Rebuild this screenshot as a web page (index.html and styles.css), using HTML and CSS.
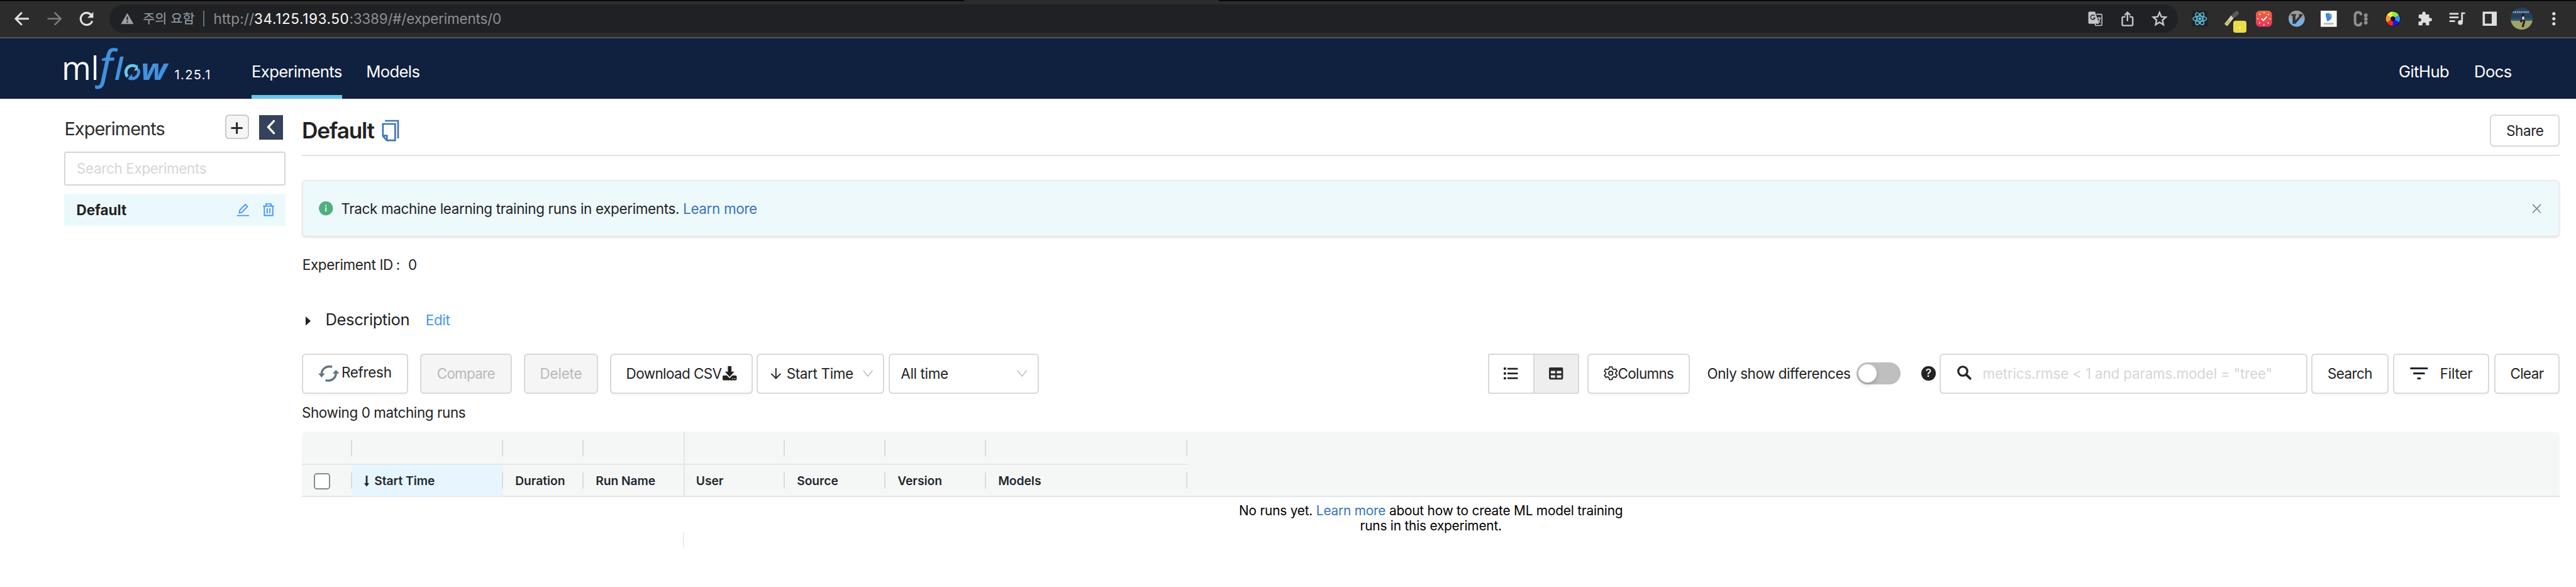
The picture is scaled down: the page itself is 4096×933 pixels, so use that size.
FILE: index.html
```
<!DOCTYPE html>
<html lang="en">
<head>
<meta charset="utf-8">
<title>MLflow</title>
<link rel="stylesheet" href="styles.css">
</head>
<body>
<div class="browser">
  <div class="browser-nav">
    <svg class="ic" viewBox="0 0 16 16"><path d="M15 8H2M8 1.8L1.8 8L8 14.2" fill="none" stroke="#e2e2e2" stroke-width="1.8"/></svg>
    <svg class="ic" viewBox="0 0 16 16"><path d="M1 8H14M8 1.8L14.2 8L8 14.2" fill="none" stroke="#7d7d7d" stroke-width="1.6"/></svg>
    <svg class="ic" viewBox="0 0 16 16"><path d="M13.6 10.3A6 6 0 1 1 12.4 4" fill="none" stroke="#e2e2e2" stroke-width="1.9"/><path d="M14.6 1.2V7H8.8Z" fill="#e2e2e2"/></svg>
  </div>
  <div class="pill">
    <svg class="warn" viewBox="0 0 13 12"><path d="M6.5 0.4L12.8 11.4H0.2Z" fill="#9aa0a6"/><path d="M6.5 4V7.6M6.5 8.7V10.1" stroke="#202124" stroke-width="1.3"/></svg>
    <span class="warn-text">주의 요함</span>
    <span class="pill-bar"></span>
    <span class="url"><span class="scheme">http://</span><span class="host">34.125.193.50</span><span class="path">:3389/#/experiments/0</span></span>
    <span class="pill-actions">
      <svg class="ic" viewBox="0 0 16 16"><path d="M2.2 1H7.6L11.6 13H2.2A1.2 1.2 0 0 1 1 11.800V2.200A1.2 1.2 0 0 1 2.2 1Z" fill="#c4c7c9"/><path d="M9 3.500H13.500A1 1 0 0 1 14.500 4.500V13.700A1 1 0 0 1 13.500 14.700H8.200L7.600 13" fill="none" stroke="#c4c7c9"/><path d="M7.300 5.300A2.200 2.200 0 1 0 7.600 7.200H5.600" fill="none" stroke="#3a3b3d" stroke-width="1.100"/><path d="M9.600 7.300H13.500M11.500 6.300V7.300M12.800 7.500C12.100 9.700 11.300 10.800 10.600 11.400M10.900 8.900C11.400 10.200 12.100 11.200 13 12" fill="none" stroke="#c4c7c9" stroke-width=".9"/></svg>
      <svg class="ic" viewBox="0 0 16 16"><path d="M6 6.200H3.800A1 1 0 0 0 2.800 7.200V13.800A1 1 0 0 0 3.800 14.800H12.200A1 1 0 0 0 13.200 13.800V7.200A1 1 0 0 0 12.200 6.200H10M8 10.500V2M5.200 4.500L8 1.700L10.800 4.500" fill="none" stroke="#c4c7c9" stroke-width="1.500"/></svg>
      <svg class="ic" viewBox="0 0 16 16"><path d="M8 1.800L9.800 6L14.300 6.400L10.900 9.400L11.900 13.900L8 11.500L4.100 13.900L5.100 9.400L1.700 6.400L6.200 6Z" fill="none" stroke="#c4c7c9" stroke-width="1.500"/></svg>
    </span>
  </div>
  <div class="exts">
    <svg class="ic" viewBox="0 0 16 16"><rect width="16" height="16" rx="1.500" fill="#1f2326"/><g fill="none" stroke="#61c5e8" stroke-width=".9"><ellipse cx="8" cy="8" rx="6.800" ry="2.600"/><ellipse cx="8" cy="8" rx="6.800" ry="2.600" transform="rotate(60 8 8)"/><ellipse cx="8" cy="8" rx="6.800" ry="2.600" transform="rotate(120 8 8)"/></g><circle cx="8" cy="8" r="1.400" fill="#61c5e8"/></svg>
    <span class="picker"><svg class="ic" viewBox="0 0 16 16"><path d="M2 14.200L8.800 5.600" stroke="#d9d5b8" stroke-width="3.600"/><path d="M2.600 13.400L5.600 9.600" stroke="#c3b84a" stroke-width="2"/><path d="M8 3.800L11.500 7.600" stroke="#1c1c1c" stroke-width="1.800"/><path d="M10 5L12.800 2.400" stroke="#5a5a5a" stroke-width="4.200" stroke-linecap="round"/></svg><span class="badge"></span></span>
    <svg class="ic" viewBox="0 0 16 16"><defs><linearGradient id="g" x1="0" y1="0" x2="0" y2="1"><stop offset="0" stop-color="#ee6c3d"/><stop offset="1" stop-color="#e8305f"/></linearGradient></defs><rect width="16" height="16" rx="4" fill="url(#g)"/><circle cx="8" cy="8" r="6" fill="none" stroke="#fff" stroke-width="1.300" stroke-dasharray="1 3.712" stroke-dashoffset=".5"/><path d="M5.500 7.800L7.400 9.700L11 5.800" fill="none" stroke="#fff" stroke-width="1.200"/></svg>
    <svg class="ic" viewBox="0 0 16 16"><circle cx="8" cy="8" r="8" fill="#7aafe0"/><path d="M0 8A8 8 0 0 1 16 8Z" fill="#9b9b9b"/><path d="M2.500 3.500H7.500V4.800H6.800V9.500L11 4.800H10V3.500H14V4.600L6.800 13H4V4.800H2.500Z" fill="#2e3338"/></svg>
    <svg class="ic" viewBox="0 0 16 16"><rect width="16" height="16" fill="#fff"/><path d="M5 3C8 1.500 11 3 11 6C11 8.500 8.500 10.500 6 10.500C7 9 4.500 6 5 3Z" fill="#3d86e8"/><path d="M8.500 3L11 3.500L10.500 7L8 5.500Z" fill="#5cb860"/><path d="M3 13H13" stroke="#b5b5b5" stroke-width="1.600"/></svg>
    <svg class="ic" viewBox="0 0 16 16"><path d="M8.300 4.500C8.300 2.500 7.200 1.500 5.400 1.500C3.300 1.500 2.300 2.800 2.300 5V11C2.300 13.200 3.300 14.500 5.400 14.500C7.200 14.500 8.300 13.500 8.300 11.500" fill="none" stroke="#8f8f8f" stroke-width="2.500"/><g fill="#8f8f8f"><circle cx="13" cy="4.500" r="1.800"/><circle cx="13" cy="8.200" r="1.800"/><circle cx="13" cy="11.900" r="1.800"/></g></svg>
    <svg class="ic" viewBox="0 0 16 16"><circle cx="8" cy="8" r="7.500" fill="#1a0a0a"/><g transform="translate(8 8)"><path d="M0 0V-7A7 7 0 0 1 6.060 -3.500Z" fill="#7ef04a"/><path d="M0 0L6.060 -3.500A7 7 0 0 1 6.060 3.500Z" fill="#3b8ff0"/><path d="M0 0L6.060 3.500A7 7 0 0 1 0 7Z" fill="#1616f5"/><path d="M0 0V7A7 7 0 0 1 -6.060 3.500Z" fill="#ee2a24"/><path d="M0 0L-6.060 3.500A7 7 0 0 1 -6.060 -3.500Z" fill="#f29a3a"/><path d="M0 0L-6.060 -3.500A7 7 0 0 1 0 -7Z" fill="#f5ec4a"/><circle r="2.300" fill="#1a1208"/></g></svg>
    <svg class="ic" viewBox="0 0 16 16"><path d="M2 3.800H5.300V2.700A1.700 1.700 0 0 1 8.700 2.700V3.800H12.200V7.200H13.200A1.700 1.700 0 0 1 13.200 10.700H12.200V14.600H9V13.500A1.700 1.700 0 0 0 5.500 13.500V14.600H1.600V10.800H2.600A1.700 1.700 0 0 0 2.600 7.300H1.600Z" fill="#dcdee0"/></svg>
    <svg class="ic" viewBox="0 0 16 16"><path d="M0.500 3H9.500M0.500 6.700H9.500M0.500 10.400H6M13 11V2.500H16" fill="none" stroke="#dcdee0" stroke-width="1.700"/><circle cx="11.300" cy="11.700" r="2.400" fill="#dcdee0"/></svg>
    <svg class="ic" viewBox="0 0 16 16"><path d="M1 1H15V15H1ZM3.200 3.200V12.800H10V3.200Z" fill="#dcdee0" fill-rule="evenodd"/></svg>
    <svg class="avatar" viewBox="0 0 22 22"><defs><clipPath id="a"><circle cx="11" cy="11" r="11"/></clipPath></defs><g clip-path="url(#a)"><rect width="22" height="22" fill="#24405f"/><rect y="13" width="22" height="9" fill="#9da668"/><path d="M0 11H22V13H0Z" fill="#33556f"/><path d="M2 4.500H18" stroke="#8fa3b5" stroke-dasharray="1.500 .6" stroke-width="1.800"/><path d="M12.500 5.500L12 11L10 14.500M12.500 11L13.500 14L12 19.500" fill="none" stroke="#2d1c18" stroke-width="2"/><path d="M12.500 9V12" stroke="#e4e4e4" stroke-width="2"/></g></svg>
    <svg class="ic" viewBox="0 0 16 16"><g fill="#dcdee0"><circle cx="8" cy="3" r="1.600"/><circle cx="8" cy="8" r="1.600"/><circle cx="8" cy="13" r="1.600"/></g></svg>
  </div>
</div>

<header class="header">
  <svg class="logo" viewBox="63 46 106 44">
    <text class="logo-ml" x="61.200" y="79.200" textLength="37" lengthAdjust="spacingAndGlyphs">ml</text>
    <g fill="#4292dc">
      <text class="logo-f" x="99.300" y="78.600">f</text>
      <text class="logo-l" x="113.400" y="79.200">l</text>
      <text class="logo-w" x="139.800" y="79.200" textLength="26.300" lengthAdjust="spacingAndGlyphs">w</text>
    </g>
    <path d="M126.600 76C123 71 126 64.700 132 64.800C133.500 64.900 134.600 65.400 135.300 66.200" fill="none" stroke="#6cc7e6" stroke-width="3"/>
    <path d="M133 70L137.300 69.400L136.600 63.800Z" fill="#6cc7e6"/>
    <path d="M137 68.500C139.200 72.200 136 78 131 77.900C129.800 77.900 128.800 77.500 128 76.800" fill="none" stroke="#4292dc" stroke-width="3"/>
    <path d="M130.800 73L127 78.600L132 79Z" fill="#4292dc"/>
  </svg>
  <span class="version">1.25.1</span>
  <nav class="nav"><a class="active">Experiments</a><a>Models</a></nav>
  <nav class="nav nav-right"><a>GitHub</a><a>Docs</a></nav>
</header>

<div class="page">
  <aside class="sidebar">
    <div class="side-head">
      <h2>Experiments</h2>
      <button class="add"><svg viewBox="0 0 12 12"><path d="M6 1V11M1 6H11" stroke="#2b2b2b" stroke-width="1.900" stroke-linecap="round"/></svg></button>
      <button class="fold"><svg viewBox="0 0 10 15"><path d="M7.800 1.500L2.200 7.500L7.800 13.500" fill="none" stroke="#fff" stroke-width="2.100" stroke-linecap="round"/></svg></button>
    </div>
    <div class="side-search">Search Experiments</div>
    <div class="side-item"><b>Default</b>
      <svg class="pencil" viewBox="0 0 14 14"><path d="M1 13.200H13" stroke="#4394ff" stroke-width="1.300" stroke-linecap="round"/><path d="M3 10.500L3.600 7.400L9.500 1.400L11.800 3.600L5.900 9.700Z" fill="none" stroke="#4394ff" stroke-width="1.200"/></svg>
      <svg class="trash" viewBox="0 0 14 15"><path d="M0.800 3.600H13.200M4.200 3.300V1.200H9.800V3.300M2.300 3.800V14H11.700V3.800M5.500 6V11.800M8.500 6V11.800" fill="none" stroke="#4394ff" stroke-width="1.300"/></svg>
    </div>
  </aside>

  <main class="main">
    <div class="title-row">
      <h1>Default</h1>
      <svg class="copy" viewBox="0 0 18 22"><path d="M3.300 1H16.700V19M1.200 4.200H13.700V21H5.200L1.200 16.500ZM1.200 16.200H5.300V21" fill="none" stroke="#3c74b9" stroke-width="1.700"/></svg>
      <button class="btn share">Share</button>
    </div>
    <div class="alert">
      <svg class="info" viewBox="0 0 14 14"><circle cx="7" cy="7" r="7" fill="#4fb07f"/><path d="M7 6V10.300M7 3.600V5" stroke="#fff" stroke-width="1.100"/></svg>
      <span>Track machine learning training runs in experiments. <a class="link">Learn more</a></span>
      <svg class="close" viewBox="0 0 10 10"><path d="M.8 .6L9.200 9.400M9.200 .6L.8 9.400" stroke="#7f8588" stroke-width="1.100"/></svg>
    </div>
    <div class="meta"><span class="meta-key">Experiment ID</span><span class="colon">:</span><span>0</span></div>
    <div class="desc"><svg class="tri" viewBox="0 0 5 9"><path d="M0 0L5 4.500L0 9Z" fill="#1f1f1f"/></svg><span class="desc-title">Description</span><a class="edit">Edit</a></div>

    <div class="toolbar">
      <button class="btn refresh"><svg viewBox="0 0 21 16"><g fill="none" stroke="#67737e" stroke-width="2.200"><path d="M13.800 1.400C8.500 -0.200 3.600 3 3.300 8.500"/><path d="M7.200 14.600C12.500 16.200 17.400 13 17.700 7.500"/></g><path d="M0 8H6.800L3.400 11.800Z M14.200 8H21L17.600 4.200Z" fill="#67737e"/></svg><span>Refresh</span></button>
      <button class="btn off compare">Compare</button>
      <button class="btn off delete">Delete</button>
      <button class="btn download">Download CSV<svg viewBox="0 0 14 14"><path d="M5.200 0H8.800V5.400H11.700L7 10.600L2.300 5.400H5.200Z" fill="#222"/><path d="M1 9.300H4.300L7 12L9.700 9.300H13A1 1 0 0 1 14 10.300V13A1 1 0 0 1 13 14H1A1 1 0 0 1 0 13V10.300A1 1 0 0 1 1 9.300Z" fill="#222"/><path d="M9.700 12.400H10.500M11.800 12.400H12.600" stroke="#fff" stroke-width=".9"/></svg></button>
      <div class="select sort"><svg class="down" viewBox="0 0 11 11"><path d="M5.500 0V10.300M.8 5.500L5.500 10.300L10.200 5.500" fill="none" stroke="#222" stroke-width="1.200"/></svg><span>Start Time</span><svg class="chev" viewBox="0 0 10 7"><path d="M.4 .4L5 6.200L9.600 .4" fill="none" stroke="#bfbfbf"/></svg></div>
      <div class="select period"><span>All time</span><svg class="chev" viewBox="0 0 10 7"><path d="M.4 .4L5 6.200L9.600 .4" fill="none" stroke="#bfbfbf"/></svg></div>

      <div class="group">
        <span><svg viewBox="0 0 14 12"><path d="M0 1.200H2.300M0 6H2.300M0 10.800H2.300" stroke="#222" stroke-width="2.300"/><path d="M3.700 1.300H14M3.700 6H14M3.700 10.700H14" stroke="#222" stroke-width="1.700"/></svg></span>
        <span class="on"><svg viewBox="0 0 14 12"><path d="M1.300 0H12.700A1.300 1.300 0 0 1 14 1.300V10.700A1.300 1.300 0 0 1 12.700 12H1.300A1.300 1.300 0 0 1 0 10.700V1.300A1.300 1.300 0 0 1 1.300 0ZM1.800 3.500V6H6.200V3.500ZM7.800 3.500V6H12.200V3.500ZM1.800 7.800V10.300H6.200V7.800ZM7.800 7.800V10.300H12.200V7.800Z" fill="#2b2b2b" fill-rule="evenodd"/></svg></span>
      </div>
      <button class="btn columns"><svg viewBox="0 0 14 14"><path d="M5.700 .7H8.300L8.800 2.600L10.100 3.400L12 2.800L13.300 5L11.900 6.400V7.600L13.300 9L12 11.200L10.100 10.600L8.800 11.400L8.300 13.300H5.700L5.200 11.400L3.900 10.600L2 11.200L.7 9L2.100 7.600V6.400L.7 5L2 2.800L3.900 3.400L5.200 2.600Z" fill="none" stroke="#222" stroke-width="1.100" stroke-linejoin="round"/><circle cx="7" cy="7" r="2" fill="none" stroke="#222" stroke-width="1.100"/></svg>Columns</button>
      <span class="diff">Only show differences</span>
      <span class="switch"><i></i></span>
      <span class="help">?</span>
      <div class="query"><svg viewBox="0 0 14 14"><circle cx="5.600" cy="5.600" r="4.500" fill="none" stroke="#222" stroke-width="2"/><path d="M9 9L13 13" stroke="#222" stroke-width="2.300" stroke-linecap="round"/></svg><span>metrics.rmse &lt; 1 and params.model = "tree"</span></div>
      <button class="btn search">Search</button>
      <button class="btn filter"><svg viewBox="0 0 18 12"><path d="M1 1H17M4 6H14M8 11H10" stroke="#1f272d" stroke-width="1.900" stroke-linecap="round"/></svg>Filter</button>
      <button class="btn clear">Clear</button>
    </div>
    <div class="showing">Showing 0 matching runs</div>

    <div class="grid">
      <div class="cols groups"><i></i><i></i><i></i><i class="pinned"></i><i></i><i></i><i></i><i></i></div>
      <div class="cols heads">
        <i><span class="check"></span></i>
        <i class="sorted"><svg viewBox="0 0 5 11"><path d="M2.500 0V9" stroke="#1f272d" stroke-width="1.700"/><path d="M0 7.500H5L2.500 11Z" fill="#1f272d"/></svg>Start Time</i>
        <i>Duration</i><i>Run Name</i><i class="pinned">User</i><i>Source</i><i>Version</i><i>Models</i>
      </div>
    </div>
    <div class="empty">
      <p>No runs yet. <a class="link">Learn more</a> about how to create ML model training<br>runs in this experiment.</p>
      <div class="pin-edge"></div>
    </div>
  </main>
</div>
</body>
</html>
```
FILE: styles.css
```
* { box-sizing: border-box; }
html { overflow: hidden; background: #fff; }
body {
  margin: 0;
  zoom: 1.6;
  font: 14px/22px Inter, "Noto Sans CJK KR", sans-serif;
  letter-spacing: -0.2px;
  color: #222;
}
svg { display: block; flex: none; overflow: visible; }
h1, h2, p { margin: 0; }
a { text-decoration: none; }
.link { color: #3a74bc; }

/* browser bar */
.browser {
  display: flex;
  align-items: center;
  height: 38px;
  padding: 0 6px;
  background: linear-gradient(90deg, #000 958px, #2c2c2c 958px 1211px, #000 1211px) top / 100% 1px no-repeat, #2c2c2c;
  border-bottom: 1.25px solid #565656;
}
.ic { width: 16px; height: 16px; margin: 0 8px; }
.browser-nav { display: flex; width: 102.5px; }
.pill {
  display: flex;
  align-items: center;
  flex: 1;
  height: 28px;
  padding: 0 2px 0 11.5px;
  border-radius: 14px;
  background: #202124;
}
.warn { width: 13px; height: 12px; }
.warn-text { width: 60px; padding-left: 9px; font-size: 13px; letter-spacing: 0; color: #9aa0a6; white-space: nowrap; }
.pill-bar { width: 1.25px; height: 16px; margin: 0 9px 0 9px; background: #6b6e72; }
.url { display: flex; color: #8d8f92; }
.scheme { letter-spacing: .08px; }
.host { letter-spacing: .42px; color: #fff; }
.path { letter-spacing: -.1px; }
.pill-actions { display: flex; margin-left: auto; }
.exts { display: flex; align-items: center; padding-left: 6px; }
.picker { position: relative; }
.badge {
  position: absolute;
  left: 17.5px;
  top: 10px;
  width: 13px;
  height: 12px;
  border-radius: 2.5px;
  background: radial-gradient(circle at 50% 60%, #fff 0.7px, #ebdc4b 0.9px);
}
.avatar { width: 22px; height: 22px; margin: 0 5px; }

/* application header */
.header {
  display: flex;
  align-items: flex-start;
  height: 60px;
  padding: 0 64px 0 63px;
  background: #10203f;
  color: #fff;
}
.logo { width: 106px; height: 44px; margin-top: 8px; }
.logo text { letter-spacing: 0; }
.logo-ml { font: 400 31.500px "Open Sans", sans-serif; fill: #fff; }
.logo-f { font: italic 400 40px "Open Sans", sans-serif; stroke: #4292dc; stroke-width: .6; }
.logo-l { font: italic 600 31px "Open Sans", sans-serif; }
.logo-w { font: italic 700 29.500px "Open Sans", sans-serif; }
.version { margin: 26px 0 0 4.500px; width: 76.500px; font-size: 12.500px; line-height: 22px; letter-spacing: .85px; }
.nav { display: flex; gap: 24px; height: 60px; font-size: 16px; letter-spacing: -.37px; }
.nav a { height: 60px; padding-top: 22px; }
.nav .active { border-bottom: 4px solid #6cc5ea; }
.nav-right { margin-left: auto; gap: 25px; }

.page { display: flex; gap: 16px; padding: 0 16px 0 64px; }

/* sidebar */
.sidebar { width: 220px; padding-top: 16px; }
.side-head { display: flex; height: 24px; align-items: flex-start; padding-right: 2.500px; }
.side-head h2 { margin-right: auto; font-size: 18px; font-weight: 400; line-height: 29px; letter-spacing: -.55px; color: #2e2e2e; }
.side-head button { display: flex; align-items: center; justify-content: center; width: 24px; height: 24px; padding: 0; }
.add { border: 1.250px solid #cbcbcb; border-radius: 4px; background: #f5f5f5; margin-right: 10px; }
.add svg { width: 12px; height: 12px; margin-top: 2px; }
.fold { border: 0; background: #34435a; margin-top: .5px; }
.fold svg { width: 10px; height: 15px; }
.side-search {
  height: 34px;
  margin: 12.500px 0 8px;
  padding-left: 11px;
  border: 1.250px solid #d6d6d6;
  border-radius: 2px;
  line-height: 31.500px;
  color: #d6d6d6;
}
.side-item { display: flex; align-items: center; height: 32px; padding: 0 11px 0 12px; background: #ecf9fc; letter-spacing: 0; }
.side-item b { margin-right: auto; }
.pencil { width: 13px; height: 13px; margin-right: 12.500px; }
.trash { width: 12.500px; height: 14px; }

/* main column */
.main { flex: 1; padding-top: 16px; }
.title-row { display: flex; align-items: center; height: 41px; padding-bottom: 8px; border-bottom: 1.250px solid #e3e3e3; }
h1 { font-size: 22px; font-weight: 600; line-height: 32px; letter-spacing: -.75px; }
.copy { width: 17.500px; height: 22px; margin-left: 7.500px; }
.btn {
  display: flex;
  align-items: center;
  justify-content: center;
  flex: none;
  height: 40px;
  padding: 0;
  border: 1.250px solid #d9d9d9;
  border-radius: 4px;
  background: #fff;
  box-shadow: 0 2px 0 rgba(0, 0, 0, .018);
  font: inherit;
  letter-spacing: -.35px;
  color: #222;
}
.btn.share { width: 69.500px; height: 32px; margin-left: auto; letter-spacing: -.25px; }
.alert {
  display: flex;
  align-items: center;
  height: 56px;
  margin-top: 24px;
  padding: 0 17px 0 15.750px;
  border: 1.250px solid #ececec;
  border-radius: 4px;
  background: #eef9fc;
  box-shadow: 0 1px 2px rgba(0, 0, 0, .12);
}
.info { width: 14px; height: 14px; margin-right: 8px; }
.close { width: 9.500px; height: 9.500px; margin-left: auto; }
.meta { display: flex; margin-top: 17px; padding-left: .5px; }
.colon { width: 15px; padding-left: 3px; }
.desc { display: flex; align-items: baseline; margin-top: 30.500px; height: 26px; line-height: 26px; padding-left: 3.500px; }
.tri { width: 5px; height: 9px; }
.desc-title { margin-left: 15px; width: 99.500px; font-size: 16px; letter-spacing: -.28px; }
.edit { color: #4394ff; }

/* toolbar */
.toolbar { display: flex; align-items: center; height: 40px; margin-top: 20.500px; }
.refresh { width: 105.500px; letter-spacing: -.17px; }
.refresh svg { width: 21px; height: 16px; margin-right: 2px; }
.refresh span { padding-bottom: 2px; }
.btn.off { background: #f5f5f5; color: #b9b9b9; box-shadow: none; margin-left: 12px; }
.compare { width: 91px; letter-spacing: -.45px; }
.delete { width: 74px; letter-spacing: -.1px; }
.download { width: 141.500px; margin: 0 4px 0 12px; }
.download svg { width: 14px; height: 14px; margin-left: 1px; }
.select, .query { display: flex; align-items: center; height: 40px; border: 1.250px solid #d9d9d9; border-radius: 4px; }
.sort { width: 127px; margin-right: 4px; padding: 0 10.500px 0 12.500px; }
.down { width: 11px; height: 11px; margin-right: 5px; }
.period { width: 149.500px; padding: 0 10.500px 0 11px; }
.chev { width: 10px; height: 7px; margin-left: auto; }
.group { display: flex; width: 91px; height: 40px; margin: 0 8px 0 auto; border: 1.250px solid #d9d9d9; border-radius: 2px; }
.group span { display: flex; align-items: center; justify-content: center; flex: 1; }
.group svg { width: 14px; height: 12px; }
.group .on { background: #eee; border-left: 1.250px solid #d9d9d9; }
.columns { width: 102px; margin-right: 17px; letter-spacing: -.4px; }
.columns svg { width: 14px; height: 14px; }
.diff { width: 148.500px; letter-spacing: -.26px; white-space: nowrap; }
.switch { width: 44px; height: 22px; padding: 2px; border-radius: 11px; background: #bfbfbf; }
.switch i { display: block; width: 18px; height: 18px; border-radius: 9px; background: #fff; box-shadow: 0 2px 4px rgba(0, 35, 11, .2); }
.help {
  width: 14px;
  height: 14px;
  margin: 0 4px 0 20.500px;
  border-radius: 7px;
  background: #222;
  color: #fff;
  font-size: 11px;
  font-weight: 500;
  line-height: 14px;
  letter-spacing: 0;
  text-align: center;
}
.query { width: 365.500px; margin-right: 4px; padding-left: 16px; letter-spacing: -.1px; color: #d6d6d6; }
.query svg { width: 14px; height: 14px; margin-right: 11.500px; margin-bottom: 2px; }
.search { width: 76.500px; }
.filter { width: 96px; margin: 0 4.500px; letter-spacing: -.15px; }
.filter svg { width: 18px; height: 12px; margin-right: 12px; }
.clear { width: 65.500px; }
.showing { margin: 8px 0; letter-spacing: -.23px; }

/* runs table */
.grid { border-bottom: 1.250px solid #e3e6e6; border-radius: 4px 4px 0 0; background: #f5f7f7; height: 65px; }
.cols { display: grid; grid-template-columns: 50px 150px 80px 99.500px 100.500px 100px 100px 200px; width: 880px; }
.groups { height: 33px; border-bottom: 1.250px solid #e5e8e8; }
.heads { height: 31px; font-size: 12px; font-weight: 600; letter-spacing: 0; color: #1f272d; }
.cols i {
  display: flex;
  align-items: center;
  padding: 1px 0 0 12px;
  font-style: normal;
  background: linear-gradient(#d8dcdd, #d8dcdd) right center / 1.250px 16px no-repeat;
}
.groups i:nth-child(4), .heads i:nth-child(4) { background: none; }
.groups i:nth-child(5), .heads .pinned { border-left: 1.250px solid #e3e6e6; }
.heads .pinned { padding-left: 11px; }
.cols .sorted { background-color: #e6f5fe; }
.sorted svg { width: 5px; height: 11px; margin-right: 5px; }
.check { width: 16px; height: 16px; border: 1.250px solid #7f8c8d; border-radius: 3px; background: #fff; }
.empty { display: grid; padding-top: 6px; font-size: 13px; line-height: 15px; letter-spacing: -.12px; color: #000; }
.empty p { grid-area: 1 / 1; text-align: center; }
.pin-edge { grid-area: 1 / 1; width: 1.250px; height: 15px; margin: 29px 0 0 379px; background: #ececec; }
```
